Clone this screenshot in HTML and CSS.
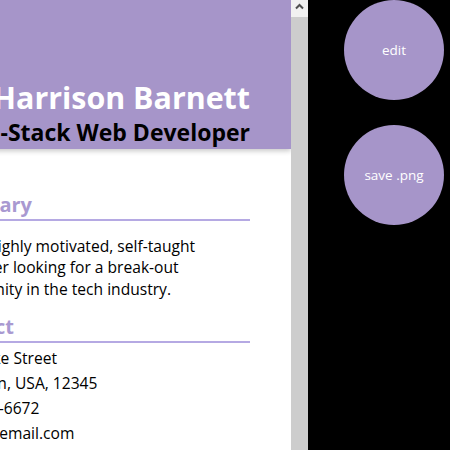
FILE: index.html
```html
<!DOCTYPE html>
<html lang="en">
<head>
<meta charset="utf-8">
<title>Resume</title>
<link rel="stylesheet" href="styles.css">
</head>
<body>
<div class="app">
  <div class="viewer">
    <div class="page">
      <header class="hero">
        <h1 class="name">Harrison Barnett</h1>
        <h2 class="role">Full-Stack Web Developer</h2>
      </header>
      <section class="section summary">
        <h3 class="section-title">Summary</h3>
        <p class="summary-text">I am a highly motivated, self-taught developer looking for a break-out opportunity in the tech industry.</p>
      </section>
      <section class="section contact">
        <h3 class="section-title">Contact</h3>
        <ul class="contact-list">
          <li>1234 Fake Street</li>
          <li>Any Town, USA, 12345</li>
          <li>(555)555-6672</li>
          <li>hb.dev@email.com</li>
        </ul>
      </section>
    </div>
  </div>
  <div class="scrollbar">
    <div class="scroll-up">
      <svg width="17" height="17" viewBox="0 0 17 17"><path d="M5 8.5 L8.5 5 L12 8.5" fill="none" stroke="#505050" stroke-width="2"/></svg>
    </div>
    <div class="scroll-track"></div>
  </div>
  <div class="actions">
    <button class="fab">edit</button>
    <button class="fab">save .png</button>
  </div>
</div>
</body>
</html>
```
FILE: styles.css
```css
html, body {
  margin: 0;
  padding: 0;
  height: 100%;
  background: #000;
  font-family: "Open Sans", "Noto Sans", sans-serif;
}
.app {
  display: flex;
  height: 450px;
  width: 450px;
  overflow: hidden;
}
.viewer {
  width: 291px;
  flex: none;
  height: 450px;
  overflow: hidden;
  background: #fff;
}
.page {
  width: 355px;
  margin-left: -64px;
}
.hero {
  height: 149px;
  box-sizing: border-box;
  background: #a695c9;
  padding: 0 41px 2px 0;
  display: flex;
  flex-direction: column;
  justify-content: flex-end;
  align-items: flex-end;
  text-align: right;
  box-shadow: 0 2px 5px rgba(0,0,0,0.22);
  position: relative;
}
.name {
  margin: 0;
  font-size: 30.4px;
  line-height: 38px;
  font-weight: 700;
  color: #fff;
  white-space: nowrap;
}
.role {
  margin: 0;
  font-size: 23px;
  line-height: 30px;
  font-weight: 700;
  color: #000;
  white-space: nowrap;
}
.section {
  padding-right: 41px;
}
.section-title {
  margin: 0;
  font-size: 20px;
  line-height: 24px;
  font-weight: 700;
  color: #a999d1;
  padding-bottom: 2px;
  border-bottom: 2px solid #b5a9e3;
}
.summary {
  padding-top: 44px;
}
.summary-text {
  margin: 15px 0 0;
  font-size: 15.6px;
  line-height: 21.3px;
  text-indent: 4px;
  color: #000;
}
.contact {
  padding-top: 15px;
}
.contact-list {
  list-style: none;
  margin: 3px 0 0;
  padding: 0;
  font-size: 15.6px;
  line-height: 25px;
  color: #000;
}
.scrollbar {
  width: 17px;
  flex: none;
  display: flex;
  flex-direction: column;
  background: #cdcdcd;
}
.scroll-up {
  height: 17px;
  background: #f1f1f1;
}
.scroll-up svg {
  display: block;
}
.scroll-track {
  flex: 1;
}
.actions {
  flex: 1;
  display: flex;
  flex-direction: column;
  align-items: flex-end;
  gap: 25px;
  padding-right: 6px;
}
.fab {
  width: 100px;
  height: 100px;
  border-radius: 50%;
  border: none;
  background: #a695c9;
  color: #fff;
  font-family: "Open Sans", "Noto Sans", sans-serif;
  font-size: 13.5px;
  padding: 0;
}
```
